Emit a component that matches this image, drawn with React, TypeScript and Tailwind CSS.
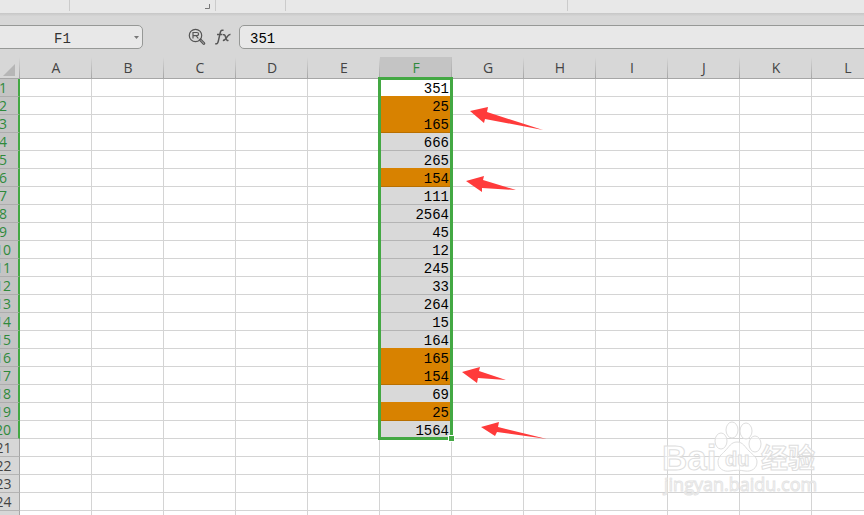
import React, { useState } from "react";

type Cell = { value: string; duplicate?: boolean };

const COLUMNS = ["A", "B", "C", "D", "E", "F", "G", "H", "I", "J", "K", "L"];
const ACTIVE_COLUMN = "F";
const ROW_COUNT = 25;

const DATA: Cell[] = [
  { value: "351" },
  { value: "25", duplicate: true },
  { value: "165", duplicate: true },
  { value: "666" },
  { value: "265" },
  { value: "154", duplicate: true },
  { value: "111" },
  { value: "2564" },
  { value: "45" },
  { value: "12" },
  { value: "245" },
  { value: "33" },
  { value: "264" },
  { value: "15" },
  { value: "164" },
  { value: "165", duplicate: true },
  { value: "154", duplicate: true },
  { value: "69" },
  { value: "25", duplicate: true },
  { value: "1564" },
];

const ARROWS = [
  "470,111 488,107 487,112 543,130 485,119 484,123",
  "466,181 484,176 483,180 516,190 482,188 482,192",
  "462,372 480,367 479,371 506,380 478,378 477,383",
  "481,427 499,422 498,427 547,439 497,432 495,436",
];

function RibbonEdge() {
  return (
    <div className="flex h-4 flex-col">
      <div className="flex h-[13px] bg-[#e8e8e8]">
        <div className="h-[11px] w-[70px] border-r border-[#cbcbcb]" />
        <div className="flex h-[11px] w-[146px] justify-end border-r border-[#cbcbcb] pt-1 pr-[5px]">
          <svg width="5" height="5" viewBox="0 0 5 5" fill="none" stroke="#777777">
            <path d="M4.5 0v4.5H0" />
          </svg>
        </div>
        <div className="h-[11px] w-[70px] border-r border-[#cbcbcb]" />
        <div className="h-[11px] w-[282px] border-r border-[#cbcbcb]" />
      </div>
      <div className="h-[3px] bg-linear-to-b from-[#c6c6c6] to-[#d5d5d5]" />
    </div>
  );
}

function FormulaBar() {
  const [formula, setFormula] = useState("351");

  return (
    <div className="flex h-[41px] items-start pt-[9px] font-['Liberation_Mono',monospace] text-sm">
      <div className="-ml-2 flex h-6 w-[151px] items-center rounded-[5px] border border-[#969896] bg-[#e8e8e8] pr-0.5">
        <input
          aria-label="Name box"
          defaultValue="F1"
          className="h-full min-w-0 flex-1 bg-transparent pt-[3px] text-center text-[#333333] outline-none"
        />
        <button type="button" aria-label="Show names" className="flex h-full w-2 items-center justify-center">
          <svg width="5" height="3" viewBox="0 0 5 3" fill="#777777">
            <path d="M0 0h5L2.5 3z" />
          </svg>
        </button>
      </div>
      <button type="button" aria-label="Browse formula result" className="ml-[45px] mt-[3px] h-[18px] w-[18px]">
        <svg width="18" height="18" viewBox="0 0 18 18" fill="none" stroke="#555555" strokeWidth="1.2">
          <circle cx="7.5" cy="7.5" r="6.2" />
          <path d="M5 10.5V4.5h3.8c1.2 0 1.8.7 1.8 1.6s-.7 1.6-1.8 1.6H5M8.3 7.8l2 2.7" />
          <path d="M11.4 12l1.1-1.1 4 4c.7.8-.5 2-1.2 1.2z" fill="#d7d7d7" />
        </svg>
      </button>
      <button type="button" aria-label="Insert function" className="ml-2 mt-[3px] h-[18px] w-[18px]">
        <svg width="18" height="18" viewBox="0 0 18 18" fill="none" stroke="#555555" strokeWidth="1.5">
          <path d="M1.2 15.6c1.7.7 2.6-.2 3.1-2.4L6.2 4.8C6.8 2.4 7.9 1.7 9.6 2.4M3 6.4h5.4" />
          <path d="M9 6.8c1.3-.4 1.9.1 2.3 1.5l1 2.6c.4 1.4.9 1.9 2.2 1.5M16.5 6.6c-1.3-.2-1.8.3-2.6 1.3l-2.6 3.4c-.7.9-1.3 1.3-2.4 1" />
        </svg>
      </button>
      <div className="-mr-2 ml-[7px] h-6 min-w-0 flex-1">
        <input
          aria-label="Formula"
          value={formula}
          onChange={(e) => setFormula(e.target.value)}
          className="h-6 w-full rounded-[5px] border border-[#969896] bg-[#e8e8e8] px-[10px] pt-[3px] text-black outline-none"
        />
      </div>
    </div>
  );
}

function fillFor(index: number) {
  const cell = DATA[index];
  const next = DATA[index + 1];
  if (!cell) return "border-b-[#d4d4d4]";
  if (cell.duplicate) {
    return next?.duplicate
      ? "bg-[#d88200] border-b-[#d88200]"
      : "bg-[#d88200] border-b-[#b86f00]";
  }
  const line = next?.duplicate ? "border-b-[#d88200]" : "border-b-[#b4b4b4]";
  return index === 0 ? `bg-white ${line}` : `bg-[#d9d9d9] ${line}`;
}

function Sheet() {
  return (
    <table className="-ml-[14px] w-[898px] table-fixed border-separate border-spacing-0 bg-white">
      <colgroup>
        <col className="w-[34px]" />
        {COLUMNS.map((name) => (
          <col key={name} className="w-[72px]" />
        ))}
      </colgroup>
      <thead className="font-['Open_Sans',sans-serif] text-sm leading-[21px] text-[#444444]">
        <tr>
          <th className="h-[22px] border-b border-[#a6a6a6] bg-[#d7d7d7] bg-linear-to-b from-[#d7d7d7] to-[#a6a6a6] bg-[length:1px_100%] bg-right bg-no-repeat p-0">
            <svg width="12" height="12" viewBox="0 0 12 12" fill="#b6b6b6" className="mt-1 ml-[17px]">
              <path d="M12 0v12H0z" />
            </svg>
          </th>
          {COLUMNS.map((name) => (
            <th
              key={name}
              scope="col"
              className={`h-[22px] border-b border-[#a6a6a6] bg-linear-to-b to-[#a6a6a6] bg-[length:1px_100%] bg-right bg-no-repeat p-0 font-normal ${
                name === ACTIVE_COLUMN
                  ? "bg-[#c4c4c4] from-[#c4c4c4] text-[#2f8a3c]"
                  : "bg-[#d7d7d7] from-[#d7d7d7]"
              }`}
            >
              {name}
            </th>
          ))}
        </tr>
      </thead>
      <tbody>
        {Array.from({ length: ROW_COUNT }, (_, index) => (
          <tr key={index}>
            <th
              scope="row"
              className={`h-[18px] border-b p-0 pl-0.5 text-center font-['Open_Sans',sans-serif] text-sm leading-[17px] font-normal ${
                index < DATA.length
                  ? "border-r-2 border-r-[#43a843] border-b-[#adadad] bg-[#c4c4c4] text-[#2f8a3c]"
                  : "border-r border-r-[#a6a6a6] border-b-[#b4b4b4] bg-[#d7d7d7] text-[#444444]"
              }`}
            >
              {index + 1}
            </th>
            {COLUMNS.map((name) => (
              <td
                key={name}
                className={`relative h-[18px] border-r border-b border-r-[#d4d4d4] p-0 pt-[3px] pr-0.5 text-right font-['Liberation_Mono',monospace] text-sm leading-[14px] text-black ${
                  name === ACTIVE_COLUMN ? fillFor(index) : "border-b-[#d4d4d4]"
                }`}
              >
                {name === ACTIVE_COLUMN && DATA[index]?.value}
                {/* selection frame hangs from the first selected cell */}
                {name === ACTIVE_COLUMN && index === 0 && (
                  <span className="pointer-events-none absolute -top-0.5 -left-0.5 z-10 h-[363px] w-[75px] border-3 border-[#43a843]">
                    <span className="absolute -right-[5px] -bottom-[5px] h-[7px] w-[7px] border border-white bg-[#43a843]" />
                  </span>
                )}
              </td>
            ))}
          </tr>
        ))}
      </tbody>
    </table>
  );
}

function Watermark() {
  return (
    <svg
      width="160"
      height="80"
      viewBox="0 0 160 80"
      fill="#ffffff"
      fillOpacity="0.5"
      stroke="#dedede"
      className="pointer-events-none absolute top-[418px] left-[660px] z-20"
    >
      <text x="2" y="52" fontFamily="Liberation Sans, sans-serif" fontSize="35" fontWeight="700">
        Bai
      </text>
      <ellipse cx="61" cy="23" rx="6" ry="8" />
      <ellipse cx="72" cy="12" rx="6" ry="8" />
      <ellipse cx="86" cy="13" rx="6" ry="8" />
      <ellipse cx="95" cy="26" rx="6" ry="8" />
      <path d="M77 24c-6 0-8 5-12 9s-7 6-7 11c0 7 6 10 12 9 5-1 10-1 15 0 7 1 12-3 12-9 0-5-4-7-8-11s-6-9-12-9z" />
      <text x="65" y="48" fontFamily="Liberation Sans, sans-serif" fontSize="20" fontWeight="700">
        du
      </text>
      <text x="101" y="50" fontFamily="Noto Sans CJK SC, sans-serif" fontSize="27" fontWeight="700">
        经验
      </text>
      <text x="4" y="73" fontFamily="Open Sans, sans-serif" fontSize="18" stroke="#e4e4e4">
        jingyan.baidu.com
      </text>
    </svg>
  );
}

export default function App() {
  return (
    <main className="relative h-screen overflow-hidden bg-[#d7d7d7]">
      <RibbonEdge />
      <FormulaBar />
      <Sheet />
      <svg width="864" height="515" fill="#ff3b3b" className="pointer-events-none absolute top-0 left-0 z-20">
        {ARROWS.map((points) => (
          <polygon key={points} points={points} />
        ))}
      </svg>
      <Watermark />
    </main>
  );
}
